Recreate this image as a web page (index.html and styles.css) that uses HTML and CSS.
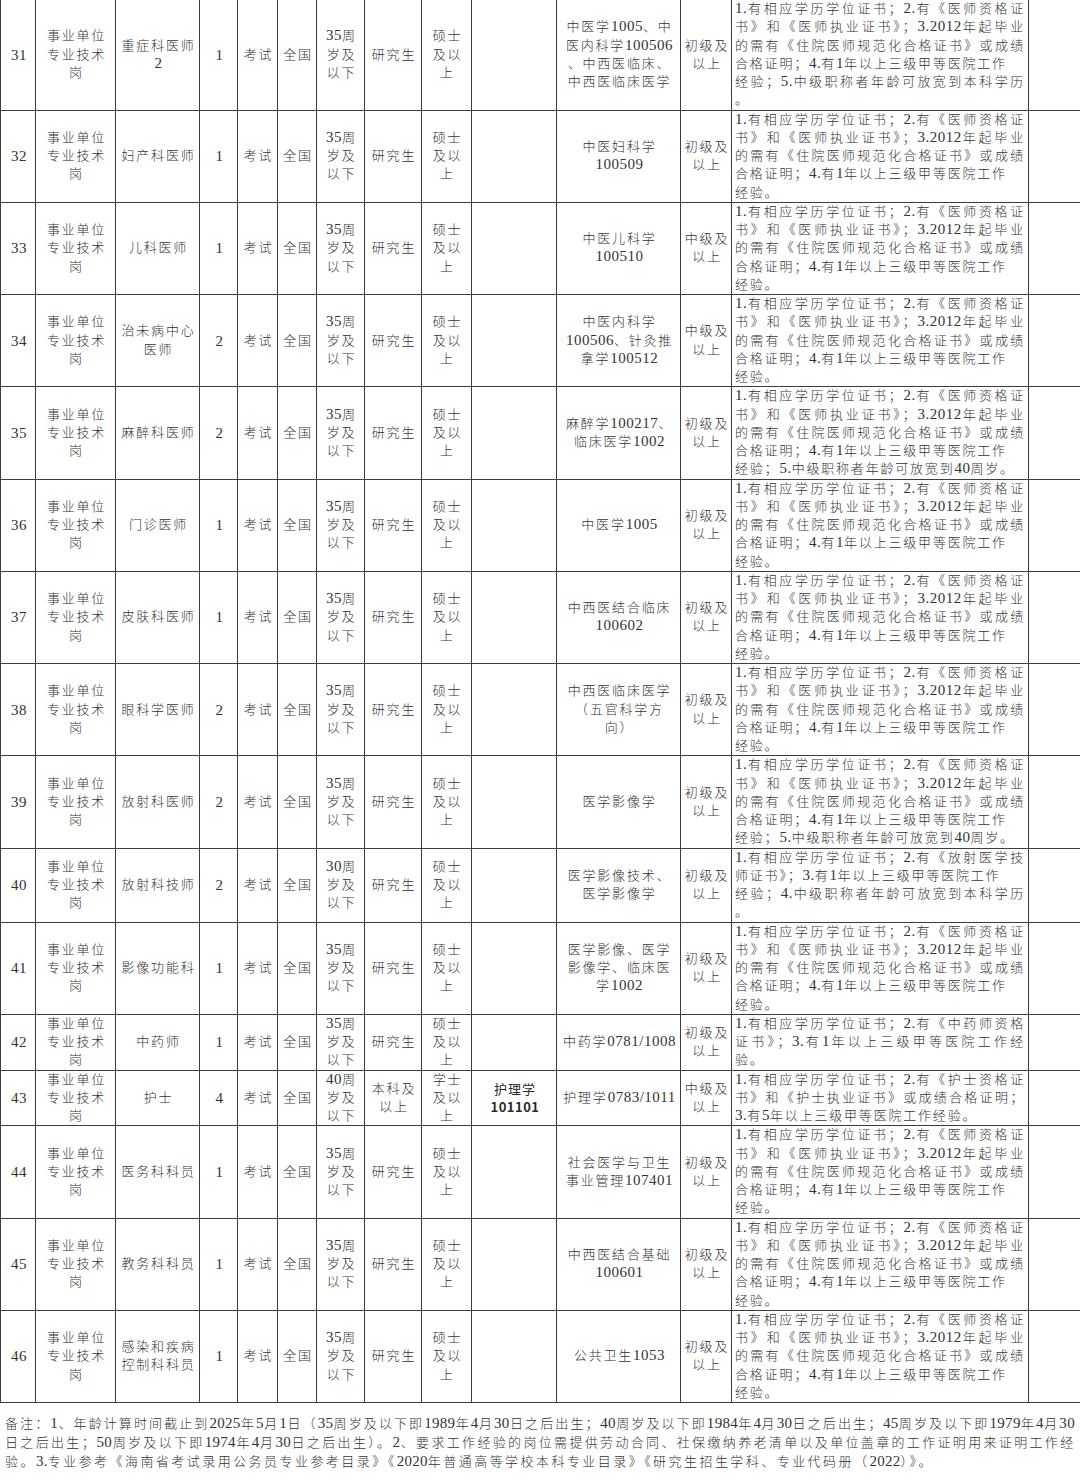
FILE: index.html
```html
<!DOCTYPE html>
<html lang="zh-CN">
<head>
<meta charset="utf-8">
<title>岗位表</title>
<link rel="stylesheet" href="styles.css">
</head>
<body>
<table class="grid">
<colgroup>
<col class="c1"><col class="c2"><col class="c3"><col class="c4"><col class="c5"><col class="c6"><col class="c7"><col class="c8"><col class="c9"><col class="c10"><col class="c11"><col class="c12"><col class="c13"><col class="c14">
</colgroup>
<tbody>
<tr>
<td class="num">31</td><td>事业单位<br>专业技术<br>岗</td><td>重症科医师<br><span class="d">2</span></td><td class="num">1</td><td>考试</td><td>全国</td><td><span class="d">35</span>周<br>岁及<br>以下</td><td>研究生</td><td>硕士<br>及以<br>上</td><td></td>
<td>中医学<span class="d">1005</span>、中<br>医内科学<span class="d">100506</span><br>、中西医临床、<br>中西医临床医学</td><td>初级及<br>以上</td>
<td class="req"><span class="ln f"><span class="d">1.</span>有相应学历学位证书；<span class="d">2.</span>有《医师资格证</span><span class="ln f">书》和《医师执业证书》；<span class="d">3.2012</span>年起毕业</span><span class="ln f">的需有《住院医师规范化合格证书》或成绩</span><span class="ln">合格证明；<span class="d">4.</span>有<span class="d">1</span>年以上三级甲等医院工作</span><span class="ln f">经验；<span class="d">5.</span>中级职称者年龄可放宽到本科学历</span><span class="ln">。</span></td><td></td>
</tr>
<tr>
<td class="num">32</td><td>事业单位<br>专业技术<br>岗</td><td>妇产科医师</td><td class="num">1</td><td>考试</td><td>全国</td><td><span class="d">35</span>周<br>岁及<br>以下</td><td>研究生</td><td>硕士<br>及以<br>上</td><td></td>
<td>中医妇科学<br><span class="d">100509</span></td><td>初级及<br>以上</td>
<td class="req"><span class="ln f"><span class="d">1.</span>有相应学历学位证书；<span class="d">2.</span>有《医师资格证</span><span class="ln f">书》和《医师执业证书》；<span class="d">3.2012</span>年起毕业</span><span class="ln f">的需有《住院医师规范化合格证书》或成绩</span><span class="ln">合格证明；<span class="d">4.</span>有<span class="d">1</span>年以上三级甲等医院工作</span><span class="ln">经验。</span></td><td></td>
</tr>
<tr>
<td class="num">33</td><td>事业单位<br>专业技术<br>岗</td><td>儿科医师</td><td class="num">1</td><td>考试</td><td>全国</td><td><span class="d">35</span>周<br>岁及<br>以下</td><td>研究生</td><td>硕士<br>及以<br>上</td><td></td>
<td>中医儿科学<br><span class="d">100510</span></td><td>中级及<br>以上</td>
<td class="req"><span class="ln f"><span class="d">1.</span>有相应学历学位证书；<span class="d">2.</span>有《医师资格证</span><span class="ln f">书》和《医师执业证书》；<span class="d">3.2012</span>年起毕业</span><span class="ln f">的需有《住院医师规范化合格证书》或成绩</span><span class="ln">合格证明；<span class="d">4.</span>有<span class="d">1</span>年以上三级甲等医院工作</span><span class="ln">经验。</span></td><td></td>
</tr>
<tr>
<td class="num">34</td><td>事业单位<br>专业技术<br>岗</td><td>治未病中心<br>医师</td><td class="num">2</td><td>考试</td><td>全国</td><td><span class="d">35</span>周<br>岁及<br>以下</td><td>研究生</td><td>硕士<br>及以<br>上</td><td></td>
<td>中医内科学<br><span class="d">100506</span>、针灸推<br>拿学<span class="d">100512</span></td><td>中级及<br>以上</td>
<td class="req"><span class="ln f"><span class="d">1.</span>有相应学历学位证书；<span class="d">2.</span>有《医师资格证</span><span class="ln f">书》和《医师执业证书》；<span class="d">3.2012</span>年起毕业</span><span class="ln f">的需有《住院医师规范化合格证书》或成绩</span><span class="ln">合格证明；<span class="d">4.</span>有<span class="d">1</span>年以上三级甲等医院工作</span><span class="ln">经验。</span></td><td></td>
</tr>
<tr>
<td class="num">35</td><td>事业单位<br>专业技术<br>岗</td><td>麻醉科医师</td><td class="num">2</td><td>考试</td><td>全国</td><td><span class="d">35</span>周<br>岁及<br>以下</td><td>研究生</td><td>硕士<br>及以<br>上</td><td></td>
<td>麻醉学<span class="d">100217</span>、<br>临床医学<span class="d">1002</span></td><td>初级及<br>以上</td>
<td class="req"><span class="ln f"><span class="d">1.</span>有相应学历学位证书；<span class="d">2.</span>有《医师资格证</span><span class="ln f">书》和《医师执业证书》；<span class="d">3.2012</span>年起毕业</span><span class="ln f">的需有《住院医师规范化合格证书》或成绩</span><span class="ln">合格证明；<span class="d">4.</span>有<span class="d">1</span>年以上三级甲等医院工作</span><span class="ln">经验；<span class="d">5.</span>中级职称者年龄可放宽到<span class="d">40</span>周岁。</span></td><td></td>
</tr>
<tr>
<td class="num">36</td><td>事业单位<br>专业技术<br>岗</td><td>门诊医师</td><td class="num">1</td><td>考试</td><td>全国</td><td><span class="d">35</span>周<br>岁及<br>以下</td><td>研究生</td><td>硕士<br>及以<br>上</td><td></td>
<td>中医学<span class="d">1005</span></td><td>初级及<br>以上</td>
<td class="req"><span class="ln f"><span class="d">1.</span>有相应学历学位证书；<span class="d">2.</span>有《医师资格证</span><span class="ln f">书》和《医师执业证书》；<span class="d">3.2012</span>年起毕业</span><span class="ln f">的需有《住院医师规范化合格证书》或成绩</span><span class="ln">合格证明；<span class="d">4.</span>有<span class="d">1</span>年以上三级甲等医院工作</span><span class="ln">经验。</span></td><td></td>
</tr>
<tr>
<td class="num">37</td><td>事业单位<br>专业技术<br>岗</td><td>皮肤科医师</td><td class="num">1</td><td>考试</td><td>全国</td><td><span class="d">35</span>周<br>岁及<br>以下</td><td>研究生</td><td>硕士<br>及以<br>上</td><td></td>
<td>中西医结合临床<br><span class="d">100602</span></td><td>初级及<br>以上</td>
<td class="req"><span class="ln f"><span class="d">1.</span>有相应学历学位证书；<span class="d">2.</span>有《医师资格证</span><span class="ln f">书》和《医师执业证书》；<span class="d">3.2012</span>年起毕业</span><span class="ln f">的需有《住院医师规范化合格证书》或成绩</span><span class="ln">合格证明；<span class="d">4.</span>有<span class="d">1</span>年以上三级甲等医院工作</span><span class="ln">经验。</span></td><td></td>
</tr>
<tr>
<td class="num">38</td><td>事业单位<br>专业技术<br>岗</td><td>眼科学医师</td><td class="num">2</td><td>考试</td><td>全国</td><td><span class="d">35</span>周<br>岁及<br>以下</td><td>研究生</td><td>硕士<br>及以<br>上</td><td></td>
<td>中西医临床医学<br>（五官科学方<br>向）</td><td>初级及<br>以上</td>
<td class="req"><span class="ln f"><span class="d">1.</span>有相应学历学位证书；<span class="d">2.</span>有《医师资格证</span><span class="ln f">书》和《医师执业证书》；<span class="d">3.2012</span>年起毕业</span><span class="ln f">的需有《住院医师规范化合格证书》或成绩</span><span class="ln">合格证明；<span class="d">4.</span>有<span class="d">1</span>年以上三级甲等医院工作</span><span class="ln">经验。</span></td><td></td>
</tr>
<tr>
<td class="num">39</td><td>事业单位<br>专业技术<br>岗</td><td>放射科医师</td><td class="num">2</td><td>考试</td><td>全国</td><td><span class="d">35</span>周<br>岁及<br>以下</td><td>研究生</td><td>硕士<br>及以<br>上</td><td></td>
<td>医学影像学</td><td>初级及<br>以上</td>
<td class="req"><span class="ln f"><span class="d">1.</span>有相应学历学位证书；<span class="d">2.</span>有《医师资格证</span><span class="ln f">书》和《医师执业证书》；<span class="d">3.2012</span>年起毕业</span><span class="ln f">的需有《住院医师规范化合格证书》或成绩</span><span class="ln">合格证明；<span class="d">4.</span>有<span class="d">1</span>年以上三级甲等医院工作</span><span class="ln">经验；<span class="d">5.</span>中级职称者年龄可放宽到<span class="d">40</span>周岁。</span></td><td></td>
</tr>
<tr>
<td class="num">40</td><td>事业单位<br>专业技术<br>岗</td><td>放射科技师</td><td class="num">2</td><td>考试</td><td>全国</td><td><span class="d">30</span>周<br>岁及<br>以下</td><td>研究生</td><td>硕士<br>及以<br>上</td><td></td>
<td>医学影像技术、<br>医学影像学</td><td>初级及<br>以上</td>
<td class="req"><span class="ln f"><span class="d">1.</span>有相应学历学位证书；<span class="d">2.</span>有《放射医学技</span><span class="ln">师证书》；<span class="d">3.</span>有<span class="d">1</span>年以上三级甲等医院工作</span><span class="ln f">经验；<span class="d">4.</span>中级职称者年龄可放宽到本科学历</span><span class="ln">。</span></td><td></td>
</tr>
<tr>
<td class="num">41</td><td>事业单位<br>专业技术<br>岗</td><td>影像功能科</td><td class="num">1</td><td>考试</td><td>全国</td><td><span class="d">35</span>周<br>岁及<br>以下</td><td>研究生</td><td>硕士<br>及以<br>上</td><td></td>
<td>医学影像、医学<br>影像学、临床医<br>学<span class="d">1002</span></td><td>初级及<br>以上</td>
<td class="req"><span class="ln f"><span class="d">1.</span>有相应学历学位证书；<span class="d">2.</span>有《医师资格证</span><span class="ln f">书》和《医师执业证书》；<span class="d">3.2012</span>年起毕业</span><span class="ln f">的需有《住院医师规范化合格证书》或成绩</span><span class="ln">合格证明；<span class="d">4.</span>有<span class="d">1</span>年以上三级甲等医院工作</span><span class="ln">经验。</span></td><td></td>
</tr>
<tr>
<td class="num">42</td><td>事业单位<br>专业技术<br>岗</td><td>中药师</td><td class="num">1</td><td>考试</td><td>全国</td><td><span class="d">35</span>周<br>岁及<br>以下</td><td>研究生</td><td>硕士<br>及以<br>上</td><td></td>
<td>中药学<span class="d">0781/1008</span></td><td>初级及<br>以上</td>
<td class="req"><span class="ln f"><span class="d">1.</span>有相应学历学位证书；<span class="d">2.</span>有《中药师资格</span><span class="ln f">证书》；<span class="d">3.</span>有<span class="d">1</span>年以上三级甲等医院工作经</span><span class="ln">验。</span></td><td></td>
</tr>
<tr>
<td class="num">43</td><td>事业单位<br>专业技术<br>岗</td><td>护士</td><td class="num">4</td><td>考试</td><td>全国</td><td><span class="d">40</span>周<br>岁及<br>以下</td><td>本科及<br>以上</td><td>学士<br>及以<br>上</td><td class="strong">护理学<br><b class="bd">101101</b></td>
<td>护理学<span class="d">0783/1011</span></td><td>中级及<br>以上</td>
<td class="req"><span class="ln f"><span class="d">1.</span>有相应学历学位证书；<span class="d">2.</span>有《护士资格证</span><span class="ln f">书》和《护士执业证书》或成绩合格证明；</span><span class="ln"><span class="d">3.</span>有<span class="d">5</span>年以上三级甲等医院工作经验。</span></td><td></td>
</tr>
<tr>
<td class="num">44</td><td>事业单位<br>专业技术<br>岗</td><td>医务科科员</td><td class="num">1</td><td>考试</td><td>全国</td><td><span class="d">35</span>周<br>岁及<br>以下</td><td>研究生</td><td>硕士<br>及以<br>上</td><td></td>
<td>社会医学与卫生<br>事业管理<span class="d">107401</span></td><td>初级及<br>以上</td>
<td class="req"><span class="ln f"><span class="d">1.</span>有相应学历学位证书；<span class="d">2.</span>有《医师资格证</span><span class="ln f">书》和《医师执业证书》；<span class="d">3.2012</span>年起毕业</span><span class="ln f">的需有《住院医师规范化合格证书》或成绩</span><span class="ln">合格证明；<span class="d">4.</span>有<span class="d">1</span>年以上三级甲等医院工作</span><span class="ln">经验。</span></td><td></td>
</tr>
<tr>
<td class="num">45</td><td>事业单位<br>专业技术<br>岗</td><td>教务科科员</td><td class="num">1</td><td>考试</td><td>全国</td><td><span class="d">35</span>周<br>岁及<br>以下</td><td>研究生</td><td>硕士<br>及以<br>上</td><td></td>
<td>中西医结合基础<br><span class="d">100601</span></td><td>初级及<br>以上</td>
<td class="req"><span class="ln f"><span class="d">1.</span>有相应学历学位证书；<span class="d">2.</span>有《医师资格证</span><span class="ln f">书》和《医师执业证书》；<span class="d">3.2012</span>年起毕业</span><span class="ln f">的需有《住院医师规范化合格证书》或成绩</span><span class="ln">合格证明；<span class="d">4.</span>有<span class="d">1</span>年以上三级甲等医院工作</span><span class="ln">经验。</span></td><td></td>
</tr>
<tr>
<td class="num">46</td><td>事业单位<br>专业技术<br>岗</td><td>感染和疾病<br>控制科科员</td><td class="num">1</td><td>考试</td><td>全国</td><td><span class="d">35</span>周<br>岁及<br>以下</td><td>研究生</td><td>硕士<br>及以<br>上</td><td></td>
<td>公共卫生<span class="d">1053</span></td><td>初级及<br>以上</td>
<td class="req"><span class="ln f"><span class="d">1.</span>有相应学历学位证书；<span class="d">2.</span>有《医师资格证</span><span class="ln f">书》和《医师执业证书》；<span class="d">3.2012</span>年起毕业</span><span class="ln f">的需有《住院医师规范化合格证书》或成绩</span><span class="ln">合格证明；<span class="d">4.</span>有<span class="d">1</span>年以上三级甲等医院工作</span><span class="ln">经验。</span></td><td></td>
</tr>
</tbody>
</table>
<div class="note">
<div class="nl nl1">备注：<span class="fd">1</span>、年龄计算时间截止到<span class="fd">2025</span>年<span class="fd">5</span>月<span class="fd">1</span>日（<span class="fd">35</span>周岁及以下即<span class="fd">1989</span>年<span class="fd">4</span>月<span class="fd">30</span>日之后出生；<span class="fd">40</span>周岁及以下即<span class="fd">1984</span>年<span class="fd">4</span>月<span class="fd">30</span>日之后出生；<span class="fd">45</span>周岁及以下即<span class="fd">1979</span>年<span class="fd">4</span>月<span class="fd">30</span></div>
<div class="nl nl2">日之后出生；<span class="fd">50</span>周岁及以下即<span class="fd">1974</span>年<span class="fd">4</span>月<span class="fd">30</span>日之后出生）。<span class="fd">2</span>、要求工作经验的岗位需提供劳动合同、社保缴纳养老清单以及单位盖章的工作证明用来证明工作经</div>
<div class="nl3">验。<span class="fd">3.</span>专业参考《海南省考试录用公务员专业参考目录》《<span class="fd">2020</span>年普通高等学校本科专业目录》《研究生招生学科、专业代码册（<span class="fd">2022</span>）》。</div>
</div>
</body>
</html>
```
FILE: styles.css
```css
html, body {
  margin: 0;
  padding: 0;
  background: #ffffff;
}
body {
  width: 1080px;
  height: 1480px;
  overflow: hidden;
  font-family: "Liberation Serif", "Noto Sans CJK SC", serif;
  font-weight: 300;
  color: #333333;
  font-size: 13px;
  letter-spacing: 1.8px;
}
.grid {
  border-collapse: collapse;
  table-layout: fixed;
  width: 1081px;
}
.c1 { width: 35px; }
.c2 { width: 80px; }
.c3 { width: 84px; }
.c4 { width: 38px; }
.c5 { width: 40px; }
.c6 { width: 39px; }
.c7 { width: 48px; }
.c8 { width: 57px; }
.c9 { width: 50px; }
.c10 { width: 85px; }
.c11 { width: 124px; }
.c12 { width: 51px; }
.c13 { width: 297px; }
.c14 { width: 53px; }
.grid td {
  border: 1px solid #3d3d3d;
  padding: 0 0 0 2px;
  line-height: 18.25px;
  text-align: center;
  vertical-align: middle;
  white-space: nowrap;
  overflow: hidden;
}
.grid tr:first-child td {
  border-top: none;
}
.d {
  font-size: 15px;
  letter-spacing: 0.5px;
  line-height: 1;
}
.grid td.num {
  font-size: 15px;
  letter-spacing: 0.5px;
}
.grid td.req {
  text-align: left;
  white-space: normal;
  padding: 0 3px 0 3px;
}
.ln {
  display: block;
  white-space: nowrap;
}
.ln.f {
  white-space: normal;
  text-align: justify;
  text-align-last: justify;
}
.grid td.strong {
  font-family: "Noto Sans CJK SC", sans-serif;
  font-weight: 400;
  color: #2a2a2a;
  letter-spacing: 1px;
}
.bd {
  font-weight: 700;
  letter-spacing: 0.5px;
}
.note {
  padding: 11px 5px 0 5px;
  font-size: 13px;
  line-height: 19px;
}
.fd {
  font-size: 15px;
  letter-spacing: 0.3px;
  line-height: 1;
}
.nl {
  text-align: justify;
  text-align-last: justify;
}
.nl1 { letter-spacing: 1.8px; }
.nl2 { letter-spacing: 1.8px; }
.nl3 { letter-spacing: 2.45px; }
```
